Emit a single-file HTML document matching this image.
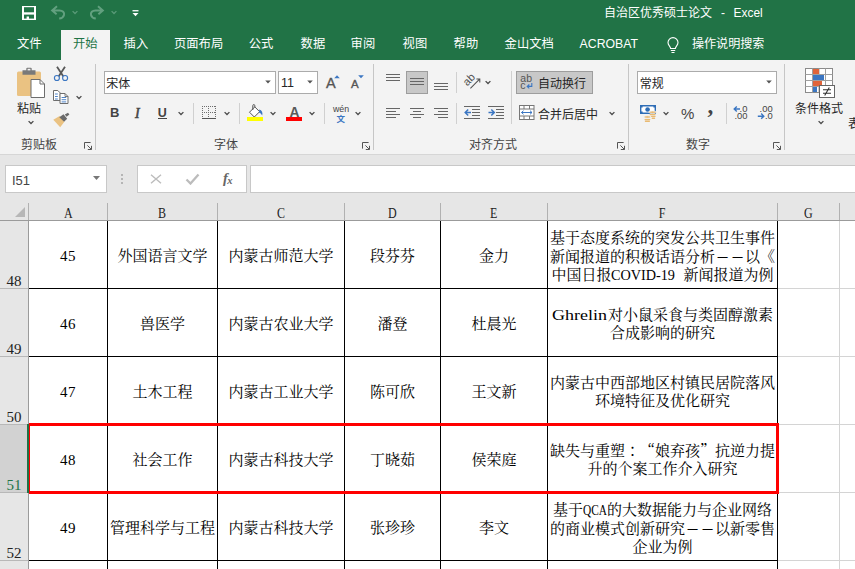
<!DOCTYPE html>
<html lang="zh-CN">
<head>
<meta charset="utf-8">
<title>自治区优秀硕士论文 - Excel</title>
<style>
html,body{margin:0;padding:0;}
body{width:855px;height:569px;overflow:hidden;position:relative;background:#e6e6e6;
 font-family:"Liberation Sans","Noto Sans CJK SC",sans-serif;font-size:12px;color:#262626;}
.abs{position:absolute;}
#app{position:absolute;left:0;top:0;width:855px;height:569px;overflow:hidden;}
/* title + tab bar */
#green{position:absolute;left:0;top:0;width:855px;height:60px;background:#217346;}
#title{position:absolute;left:604px;top:4.8px;color:#fff;font-size:12px;line-height:17px;white-space:nowrap;}
.tab{position:absolute;top:35px;margin-left:0.6px;height:18px;line-height:18px;color:#fff;font-size:12.3px;white-space:nowrap;}
#tabsel{position:absolute;left:61px;top:30px;width:49px;height:30px;background:#f3f3f3;}
#ribbon{position:absolute;left:0;top:60px;width:855px;height:94px;background:#f3f3f3;border-bottom:1px solid #d6d6d6;}
.sep{position:absolute;width:1px;background:#c8c8c8;}
.glabel{position:absolute;top:137.5px;height:14px;line-height:14px;font-size:12px;color:#444;white-space:nowrap;}
.rt{position:absolute;white-space:nowrap;color:#262626;}
.combo{position:absolute;background:#fff;border:1px solid #ababab;box-sizing:border-box;}
.chev{position:absolute;width:4px;height:4px;border-right:1px solid #555;border-bottom:1px solid #555;transform:rotate(45deg);}
.tri{position:absolute;width:0;height:0;border-left:3px solid transparent;border-right:3px solid transparent;border-top:3px solid #555;}
/* formula bar */
#fbar{position:absolute;left:0;top:155px;width:855px;height:49px;background:#e6e6e6;}
.fbox{position:absolute;top:165px;height:28px;background:#fff;border:1px solid #c8c8c8;box-sizing:border-box;}
/* grid */
#grid{position:absolute;left:0;top:204px;width:855px;height:365px;background:#fff;}
#colhdr{position:absolute;left:0;top:204px;width:855px;height:16px;background:#e6e6e6;border-bottom:1px solid #9b9b9b;}
#rowhdr{position:absolute;left:0;top:221px;width:28px;height:348px;background:#e6e6e6;border-right:1px solid #9b9b9b;}
.ch{position:absolute;top:206px;height:15px;line-height:15px;text-align:center;font-family:"Liberation Serif","Noto Serif CJK SC",serif;font-size:15px;color:#222;}
.chs{position:absolute;top:203px;width:1px;height:17px;background:#b1b1b1;}
.rh{position:absolute;left:0;width:28px;text-align:center;font-family:"Liberation Serif","Noto Serif CJK SC",serif;font-size:15px;line-height:15px;height:15px;color:#222;}
.vl{position:absolute;width:1px;background:#000;top:221px;height:348px;}
.hl{position:absolute;height:1px;background:#000;left:29px;width:749px;}
.gl{position:absolute;background:#d4d4d4;}
.c{position:absolute;display:flex;align-items:center;justify-content:center;text-align:center;
 font-family:"Liberation Serif","Noto Serif CJK SC",serif;font-size:15px;line-height:18px;color:#000;white-space:nowrap;}
.c>div{position:relative;top:1px;}
.c.t3>div{top:2px;}
.c.n{letter-spacing:0.5px;}
.c span.l{display:inline-block;text-align:left;white-space:nowrap;vertical-align:baseline;}
.c span.l>span{display:inline-block;transform-origin:0 50%;}
.c.t2>div{top:1px;}
.ch>span{display:inline-block;transform:scaleX(.8);}
.c span.p{font-family:"Noto Serif CJK SC",serif;}
.c span.q{font-family:"Noto Serif CJK SC",serif;display:inline-block;width:15px;}
.c span.d{transform:scaleX(.8);font-weight:700;}
.c span.j{font-family:"Noto Serif CJK JP",serif;}
</style>
</head>
<body>
<div id="app">
<div id="green"></div>
<div id="title">自治区优秀硕士论文<span style="position:absolute;left:117px;top:0">-</span><span style="position:absolute;left:129.6px;top:0;font-size:11.9px">Excel</span></div>
<div id="tabsel"></div>
<div class="tab" style="left:16.4px">文件</div>
<div class="tab" style="left:72.4px;color:#217346">开始</div>
<div class="tab" style="left:123px">插入</div>
<div class="tab" style="left:173.4px">页面布局</div>
<div class="tab" style="left:248.2px">公式</div>
<div class="tab" style="left:300px">数据</div>
<div class="tab" style="left:350px">审阅</div>
<div class="tab" style="left:402px">视图</div>
<div class="tab" style="left:453px">帮助</div>
<div class="tab" style="left:504px">金山文档</div>
<div class="tab" style="left:579px">ACROBAT</div>
<div class="tab" style="left:691.3px;font-size:12.1px">操作说明搜索</div>
<div id="ribbon"></div>
<!--RIBBON-->
<svg class="abs" style="left:22px;top:6px" width="14" height="14" viewBox="0 0 14 14"><path d="M1 0.6H13V13.4H1Z" fill="#fff" stroke="#fff" stroke-width="2" /><rect x="2" y="1.2" width="10" height="5.1" fill="#217346"/><rect x="2" y="8.6" width="10" height="4" fill="#217346"/><rect x="4.6" y="10.5" width="2.4" height="2.5" fill="#fff"/></svg>
<svg class="abs" style="left:50px;top:5px" width="16" height="15" viewBox="0 0 16 15"><path d="M7 1.3L2.2 5.4L6.6 9.2M2.4 5.4H9.5C12.8 5.4 14.6 7.6 14 10C13.4 12.2 11.6 13.4 9.2 13.6" fill="none" stroke="#62a07f" stroke-width="2"/></svg>
<svg class="abs" style="left:71px;top:10px" width="8" height="5" viewBox="0 0 8 5"><path d="M1.6 1.1L4 3.5L6.4 1.1" stroke="#5a9a78" stroke-width="1.3" fill="none"/></svg>
<svg class="abs" style="left:89px;top:5px" width="16" height="15" viewBox="0 0 16 15"><path d="M9 1.3L13.8 5.4L9.4 9.2M13.6 5.4H6.5C3.2 5.4 1.4 7.6 2 10C2.6 12.2 4.4 13.4 6.8 13.6" fill="none" stroke="#62a07f" stroke-width="2"/></svg>
<svg class="abs" style="left:110px;top:10px" width="8" height="5" viewBox="0 0 8 5"><path d="M1.6 1.1L4 3.5L6.4 1.1" stroke="#5a9a78" stroke-width="1.3" fill="none"/></svg>
<svg class="abs" style="left:132px;top:10px" width="8" height="7" viewBox="0 0 8 7"><path d="M0.5 0.75H6.5" stroke="#fff" stroke-width="1.3"/><path d="M0.5 3H6.5L3.5 6.2Z" fill="#fff"/></svg>
<svg class="abs" style="left:666px;top:37px" width="14" height="17" viewBox="0 0 14 17"><path d="M4.6 11.5C4.6 9.5 2 8.6 2 5.6A5 5 0 0 1 12 5.6C12 8.6 9.4 9.5 9.4 11.5Z" fill="none" stroke="#fff" stroke-width="1.1"/><path d="M4.8 13.5H9.2M5.5 15.5H8.5" stroke="#fff" stroke-width="1.1"/></svg>
<svg class="abs" style="left:16px;top:67px" width="30" height="31" viewBox="0 0 30 31">
<rect x="1" y="4.5" width="24" height="24.5" rx="1.5" fill="#eac282"/>
<path d="M6.5 4.5V3.2H10.3V1.6A1 1 0 0 1 11.3 0.8H14.7A1 1 0 0 1 15.7 1.6V3.2H19.5V7.8H6.5Z" fill="#797979"/>
<rect x="11.6" y="1.8" width="2.8" height="1.6" fill="#f3f3f3"/>
<path d="M15 12.5H24L28.5 17V30.5H15Z" fill="#fff" stroke="#6d6d6d" stroke-width="1"/>
<path d="M24 12.5V17H28.5" fill="none" stroke="#6d6d6d" stroke-width="1"/>
</svg>
<div class="rt" style="left:17px;top:101px;font-size:12px;line-height:16px;">粘贴</div>
<svg class="abs" style="left:27px;top:120px" width="8" height="5" viewBox="0 0 8 5"><path d="M1.6 1.1L4 3.5L6.4 1.1" stroke="#4a4a4a" stroke-width="1.3" fill="none"/></svg>
<svg class="abs" style="left:53px;top:66px" width="16" height="16" viewBox="0 0 16 16">
<path d="M4 0.8L10.4 10.6M12 0.8L5.6 10.6" stroke="#585858" stroke-width="1.8" fill="none"/>
<circle cx="3.9" cy="12" r="2.5" fill="#f3f3f3" stroke="#3b76c2" stroke-width="1.15"/>
<circle cx="12.1" cy="12" r="2.5" fill="#f3f3f3" stroke="#3b76c2" stroke-width="1.15"/>
</svg>
<svg class="abs" style="left:52px;top:89px" width="18" height="16" viewBox="0 0 18 16">
<path d="M1.5 1.5H5.8L8.2 3.9V11.5H1.5Z" fill="#fff" stroke="#6d6d6d"/>
<path d="M3 5H5.8M3 7.5H5.8M3 10H5.8" stroke="#3b76c2" stroke-width="0.9"/>
<path d="M8 4.5H13L16 7.5V14.5H8Z" fill="#fff" stroke="#6d6d6d"/>
<path d="M13 4.5V7.5H16" fill="none" stroke="#6d6d6d" stroke-width="0.9"/>
<path d="M9.6 8.5H14.2M9.6 10.7H14.2M9.6 12.9H14.2" stroke="#3b76c2" stroke-width="0.9"/>
</svg>
<svg class="abs" style="left:75px;top:95px" width="8" height="5" viewBox="0 0 8 5"><path d="M1.6 1.1L4 3.5L6.4 1.1" stroke="#4a4a4a" stroke-width="1.3" fill="none"/></svg>
<svg class="abs" style="left:53px;top:112px" width="17" height="16" viewBox="0 0 17 16">
<path d="M0.3 7.7L6.6 4.1L11.4 9.8L7.2 15.2Z" fill="#eac282"/>
<path d="M6.3 5.3L10.5 2.3L14.2 6.8L11.1 9.8Z" fill="#6a6a6a"/>
<path d="M11.8 2.6L15 0.8L16.4 2.6L13.6 4.8Z" fill="#6a6a6a"/>
</svg>
<div class="glabel" style="left:21px;">剪贴板</div>
<svg class="abs" style="left:84px;top:142px" width="8" height="8" viewBox="0 0 8 8"><path d="M0.5 6.6V0.5H6.6M3.4 3.4L7.3 7.3M7.5 3.8V7.5H3.8" stroke="#555" stroke-width="1" fill="none"/></svg>
<div class="sep" style="left:95px;top:64px;height:86px;background:#c6c6c6"></div>
<div class="combo" style="left:104px;top:71px;width:172px;height:23px"></div>
<div class="rt" style="left:106.3px;top:76px;font-size:12px;line-height:16px;">宋体</div>
<svg class="abs" style="left:264px;top:80px" width="8" height="4" viewBox="0 0 8 4"><path d="M1.2 0.5H6.8L4 3.5Z" fill="#555"/></svg>
<div class="combo" style="left:278px;top:71px;width:40px;height:23px"></div>
<div class="rt" style="left:281px;top:75px;font-size:12px;line-height:16px;font-size:12.5px">11</div>
<svg class="abs" style="left:306px;top:80px" width="8" height="4" viewBox="0 0 8 4"><path d="M1.2 0.5H6.8L4 3.5Z" fill="#555"/></svg>
<div class="rt" style="left:326px;top:73.7px;font-size:15px;line-height:19px;color:#555;font-size:14.5px;-webkit-text-stroke:0.35px #555">A</div>
<svg class="abs" style="left:333.5px;top:75px" width="6" height="4" viewBox="0 0 6 4"><path d="M0.2 3.2H5.8L3 0.2Z" fill="#3b76c2"/></svg>
<div class="rt" style="left:351px;top:76px;font-size:12px;line-height:16px;color:#555;font-size:11.5px;-webkit-text-stroke:0.35px #555">A</div>
<svg class="abs" style="left:358px;top:75px" width="6" height="4" viewBox="0 0 6 4"><path d="M0.2 0.2H5.8L3 3.2Z" fill="#3b76c2"/></svg>
<div class="rt" style="left:110px;top:104px;font-size:13px;line-height:17px;color:#444;font-size:13px"><b>B</b></div>
<div class="rt" style="left:135px;top:104.8px;font-size:13px;line-height:17px;color:#444;font-family:'Liberation Serif',serif;font-size:14px;-webkit-text-stroke:0.5px #444"><i>I</i></div>
<div class="rt" style="left:157.8px;top:104.8px;font-size:13px;line-height:17px;color:#444;font-size:12.5px"><b>U</b></div>
<div class="abs" style="left:158px;top:118px;width:9px;height:1px;background:#444"></div>
<svg class="abs" style="left:177px;top:111px" width="8" height="5" viewBox="0 0 8 5"><path d="M1.6 1.1L4 3.5L6.4 1.1" stroke="#4a4a4a" stroke-width="1.3" fill="none"/></svg>
<div class="sep" style="left:193px;top:103px;height:21px;background:#d0d0d0"></div>
<svg class="abs" style="left:202px;top:106px" width="14" height="14" viewBox="0 0 14 14">
<path d="M0 0.5H14M0 6.5H14M0.5 0V12M6.5 0V12M13.5 0V12" stroke="#6e6e6e" stroke-width="1" stroke-dasharray="1 1" fill="none" shape-rendering="crispEdges"/>
<path d="M0 12.5H14" stroke="#555" stroke-width="1"/></svg>
<svg class="abs" style="left:223px;top:111px" width="8" height="5" viewBox="0 0 8 5"><path d="M1.6 1.1L4 3.5L6.4 1.1" stroke="#4a4a4a" stroke-width="1.3" fill="none"/></svg>
<div class="sep" style="left:239px;top:103px;height:21px;background:#d0d0d0"></div>
<svg class="abs" style="left:247px;top:104px" width="18" height="18" viewBox="0 0 18 18">
<path d="M2.5 8.2L7.8 2.9L12.6 7.7L7.3 13Z" fill="#fff" stroke="#555" stroke-width="1"/>
<path d="M5.8 6V1.6A1 1 0 0 1 7.8 1.6V3" fill="none" stroke="#555" stroke-width="1"/>
<path d="M12.2 5.6C15 6.2 16 8.8 15.2 11.6C14.2 9.6 13.4 8.8 12 8.4Z" fill="#3b76c2"/>
<rect x="0" y="13" width="16" height="4" fill="#ffff00"/></svg>
<svg class="abs" style="left:269px;top:111px" width="8" height="5" viewBox="0 0 8 5"><path d="M1.6 1.1L4 3.5L6.4 1.1" stroke="#4a4a4a" stroke-width="1.3" fill="none"/></svg>
<div class="rt" style="left:289.5px;top:103.5px;font-size:14px;line-height:18px;color:#5a5a5a;font-size:13.8px;font-weight:bold">A</div>
<div class="abs" style="left:286px;top:117px;width:16px;height:4px;background:#ff0000"></div>
<svg class="abs" style="left:308px;top:111px" width="8" height="5" viewBox="0 0 8 5"><path d="M1.6 1.1L4 3.5L6.4 1.1" stroke="#4a4a4a" stroke-width="1.3" fill="none"/></svg>
<div class="sep" style="left:324px;top:103px;height:21px;background:#d0d0d0"></div>
<div class="rt" style="left:333px;top:102.5px;font-size:9px;line-height:13px;color:#444;font-size:8.8px;line-height:12px">wén</div>
<div class="rt" style="left:336.5px;top:112.5px;font-size:9px;line-height:13px;color:#3b76c2;font-size:8.5px;line-height:12px;font-weight:bold">文</div>
<svg class="abs" style="left:354px;top:111px" width="8" height="5" viewBox="0 0 8 5"><path d="M1.6 1.1L4 3.5L6.4 1.1" stroke="#4a4a4a" stroke-width="1.3" fill="none"/></svg>
<div class="glabel" style="left:214px;">字体</div>
<svg class="abs" style="left:362px;top:142px" width="8" height="8" viewBox="0 0 8 8"><path d="M0.5 6.6V0.5H6.6M3.4 3.4L7.3 7.3M7.5 3.8V7.5H3.8" stroke="#555" stroke-width="1" fill="none"/></svg>
<div class="sep" style="left:373px;top:64px;height:86px;background:#c6c6c6"></div>
<div class="abs" style="left:386px;top:74px;width:14px;height:1px;background:#666"></div>
<div class="abs" style="left:386px;top:77px;width:14px;height:1px;background:#666"></div>
<div class="abs" style="left:386px;top:80px;width:14px;height:1px;background:#666"></div>
<div class="abs" style="left:406px;top:71px;width:22px;height:23px;box-sizing:border-box;background:#c8c8c8;border:1px solid #9d9d9d"></div>
<div class="abs" style="left:410px;top:78px;width:14px;height:1px;background:#666"></div>
<div class="abs" style="left:410px;top:81px;width:14px;height:1px;background:#666"></div>
<div class="abs" style="left:410px;top:84px;width:14px;height:1px;background:#666"></div>
<div class="abs" style="left:434px;top:83px;width:14px;height:1px;background:#666"></div>
<div class="abs" style="left:434px;top:86px;width:14px;height:1px;background:#666"></div>
<div class="abs" style="left:434px;top:89px;width:14px;height:1px;background:#666"></div>
<div class="sep" style="left:456px;top:72px;height:21px;background:#d0d0d0"></div>
<svg class="abs" style="left:462px;top:72px" width="20" height="19" viewBox="0 0 20 19">
<text transform="translate(5.2,14.4) rotate(-45)" font-family="Liberation Sans, sans-serif" font-size="11" fill="#505050">ab</text>
<path d="M8.4 16.4L17.6 7.2M14.4 7H17.8V10.4" fill="none" stroke="#505050" stroke-width="1.05"/></svg>
<svg class="abs" style="left:484px;top:80px" width="8" height="5" viewBox="0 0 8 5"><path d="M1.6 1.1L4 3.5L6.4 1.1" stroke="#4a4a4a" stroke-width="1.3" fill="none"/></svg>
<div class="sep" style="left:511px;top:71px;height:53px;background:#d0d0d0"></div>
<div class="abs" style="left:386px;top:108px;width:14px;height:1px;background:#666"></div>
<div class="abs" style="left:386px;top:111px;width:10px;height:1px;background:#666"></div>
<div class="abs" style="left:386px;top:114px;width:14px;height:1px;background:#666"></div>
<div class="abs" style="left:386px;top:117px;width:10px;height:1px;background:#666"></div>
<div class="abs" style="left:410.0px;top:108px;width:14px;height:1px;background:#666"></div>
<div class="abs" style="left:413.0px;top:111px;width:8px;height:1px;background:#666"></div>
<div class="abs" style="left:410.0px;top:114px;width:14px;height:1px;background:#666"></div>
<div class="abs" style="left:413.0px;top:117px;width:8px;height:1px;background:#666"></div>
<div class="abs" style="left:434px;top:108px;width:14px;height:1px;background:#666"></div>
<div class="abs" style="left:438px;top:111px;width:10px;height:1px;background:#666"></div>
<div class="abs" style="left:434px;top:114px;width:14px;height:1px;background:#666"></div>
<div class="abs" style="left:438px;top:117px;width:10px;height:1px;background:#666"></div>
<div class="sep" style="left:456px;top:103px;height:21px;background:#d0d0d0"></div>
<svg class="abs" style="left:464px;top:106px" width="17" height="14" viewBox="0 0 17 14">
<path d="M0 0.5H16M8 3.5H16M8 6.5H16M8 9.5H16M0 12.5H16" stroke="#666" stroke-width="1"/>
<path d="M7 6.5H1.5M4.2 3.5L1.2 6.5L4.2 9.5" stroke="#3b76c2" stroke-width="1.5" fill="none"/></svg>
<svg class="abs" style="left:488px;top:106px" width="17" height="14" viewBox="0 0 17 14">
<path d="M0 0.5H16M8 3.5H16M8 6.5H16M8 9.5H16M0 12.5H16" stroke="#666" stroke-width="1"/>
<path d="M0.5 6.5H6M3.3 3.5L6.3 6.5L3.3 9.5" stroke="#3b76c2" stroke-width="1.5" fill="none"/></svg>
<div class="abs" style="left:516px;top:71px;width:77px;height:23px;box-sizing:border-box;background:#c8c8c8;border:1px solid #9d9d9d"></div>
<svg class="abs" style="left:520px;top:73px" width="15" height="18" viewBox="0 0 15 18">
<text x="0.3" y="9" font-family="Liberation Sans, sans-serif" font-size="10.5" fill="#555">ab</text>
<text x="0.3" y="16" font-family="Liberation Sans, sans-serif" font-size="10.5" fill="#555">c</text>
<path d="M11.8 10V13.4H7.4M9.3 11.5L7.2 13.4L9.3 15.3" fill="none" stroke="#3b76c2" stroke-width="1.1"/></svg>
<div class="rt" style="left:538px;top:75.5px;font-size:12px;line-height:16px;">自动换行</div>
<svg class="abs" style="left:519px;top:105px" width="16" height="15" viewBox="0 0 16 15">
<rect x="0.5" y="0.5" width="14.5" height="14" fill="#fff" stroke="#777"/>
<path d="M0.5 4H15M0.5 11H15M5 0.5V4M10.5 0.5V4M5 11V14.5M10.5 11V14.5" stroke="#777" stroke-width="1" fill="none"/>
<path d="M2.5 7.5H13M4.5 5.7L2.5 7.5L4.5 9.3M11 5.7L13 7.5L11 9.3" stroke="#3b76c2" stroke-width="1" fill="none"/></svg>
<div class="rt" style="left:538px;top:106.5px;font-size:12px;line-height:16px;">合并后居中</div>
<svg class="abs" style="left:608px;top:111px" width="8" height="5" viewBox="0 0 8 5"><path d="M1.6 1.1L4 3.5L6.4 1.1" stroke="#4a4a4a" stroke-width="1.3" fill="none"/></svg>
<div class="glabel" style="left:469px;">对齐方式</div>
<svg class="abs" style="left:617px;top:142px" width="8" height="8" viewBox="0 0 8 8"><path d="M0.5 6.6V0.5H6.6M3.4 3.4L7.3 7.3M7.5 3.8V7.5H3.8" stroke="#555" stroke-width="1" fill="none"/></svg>
<div class="sep" style="left:628px;top:64px;height:86px;background:#c6c6c6"></div>
<div class="combo" style="left:637px;top:71px;width:140px;height:23px"></div>
<div class="rt" style="left:639.8px;top:76px;font-size:12px;line-height:16px;">常规</div>
<svg class="abs" style="left:765px;top:80px" width="8" height="4" viewBox="0 0 8 4"><path d="M1.2 0.5H6.8L4 3.5Z" fill="#555"/></svg>
<svg class="abs" style="left:640px;top:104px" width="18" height="18" viewBox="0 0 18 18">
<rect x="0" y="1" width="16" height="9" fill="#2e6db6"/>
<path d="M2.6 2.4H13.4V3.4H14.6V7.6H13.4V8.6H2.6V7.6H1.4V3.4H2.6Z" fill="#fff"/>
<circle cx="7.6" cy="5.5" r="2.3" fill="#2e6db6"/>
<g fill="#e9ba72"><ellipse cx="12.6" cy="8.2" rx="3.7" ry="1.3" stroke="#f3f3f3" stroke-width="0.8"/>
<rect x="9.6" y="10" width="6" height="1.3" rx="0.6"/><rect x="11" y="11.8" width="4.6" height="1.3" rx="0.6"/><rect x="11.6" y="13.6" width="3.6" height="1.3" rx="0.6"/>
<ellipse cx="7.4" cy="13" rx="3.5" ry="1.3" stroke="#f3f3f3" stroke-width="0.8"/><rect x="4.4" y="14.9" width="6" height="1.3" rx="0.6"/><rect x="4.8" y="16.6" width="5.2" height="1.3" rx="0.6"/></g>
</svg>
<svg class="abs" style="left:662px;top:111.4px" width="8" height="5" viewBox="0 0 8 5"><path d="M1.6 1.1L4 3.5L6.4 1.1" stroke="#4a4a4a" stroke-width="1.3" fill="none"/></svg>
<div class="rt" style="left:681px;top:103.5px;font-size:15px;line-height:19px;color:#444;font-size:15px">%</div>
<div class="rt" style="left:707.5px;top:90.5px;font-size:18px;line-height:22px;color:#444;font-size:23px;line-height:30px;font-weight:bold;font-family:'Liberation Serif',serif">,</div>
<div class="sep" style="left:726px;top:103px;height:21px;background:#d0d0d0"></div>
<svg class="abs" style="left:733px;top:105px" width="17" height="15" viewBox="0 0 17 15">
<text x="6.6" y="7.2" font-family="Liberation Sans, sans-serif" font-size="9.4" fill="#444">.0</text>
<text x="1.4" y="14.4" font-family="Liberation Sans, sans-serif" font-size="9.4" fill="#444">.00</text>
<path d="M7 4H1.4M3.8 1.4L1.2 4L3.8 6.6" stroke="#3b76c2" stroke-width="1.4" fill="none"/></svg>
<svg class="abs" style="left:757px;top:105px" width="17" height="15" viewBox="0 0 17 15">
<text x="2.6" y="7.2" font-family="Liberation Sans, sans-serif" font-size="9.4" fill="#444">.00</text>
<text x="8" y="14.4" font-family="Liberation Sans, sans-serif" font-size="9.4" fill="#444">.0</text>
<path d="M0.8 11.2H6.6M4.2 8.6L6.8 11.2L4.2 13.8" stroke="#3b76c2" stroke-width="1.4" fill="none"/></svg>
<div class="glabel" style="left:686px;">数字</div>
<svg class="abs" style="left:773px;top:142px" width="8" height="8" viewBox="0 0 8 8"><path d="M0.5 6.6V0.5H6.6M3.4 3.4L7.3 7.3M7.5 3.8V7.5H3.8" stroke="#555" stroke-width="1" fill="none"/></svg>
<div class="sep" style="left:784px;top:64px;height:86px;background:#c6c6c6"></div>
<svg class="abs" style="left:805px;top:68px" width="31" height="31" viewBox="0 0 31 31">
<rect x="0.5" y="0.5" width="27" height="24" fill="#fff" stroke="#8a8a8a"/>
<path d="M7.5 0.5V24.5M14 0.5V24.5M20.5 0.5V24.5M0.5 6.5H27.5M0.5 12.5H27.5M0.5 18.5H27.5" stroke="#a0a0a0" stroke-width="1" fill="none"/>
<rect x="8" y="1" width="6" height="5" fill="#e0643a"/>
<rect x="8" y="7" width="11" height="5" fill="#3b76c2"/>
<rect x="8" y="13" width="9" height="5" fill="#e0643a"/>
<rect x="8" y="19" width="4" height="5" fill="#3b76c2"/>
<rect x="14.5" y="17.5" width="15" height="12" fill="#fff" stroke="#666"/>
<path d="M18 21.8H26M18 25.2H26M24.3 19.5L19.7 27.5" stroke="#333" stroke-width="1.1" fill="none"/>
</svg>
<div class="rt" style="left:795px;top:101px;font-size:12px;line-height:16px;">条件格式</div>
<svg class="abs" style="left:817px;top:120px" width="8" height="5" viewBox="0 0 8 5"><path d="M1.6 1.1L4 3.5L6.4 1.1" stroke="#4a4a4a" stroke-width="1.3" fill="none"/></svg>
<div class="rt" style="left:848px;top:116px;font-size:12px;line-height:16px;">表格格式</div>
<!--/RIBBON-->
<div id="fbar"></div>
<!--FBAR-->
<div class="fbox" style="left:5px;width:102px"></div>
<div class="rt" style="left:12px;top:171.5px;font-size:13px;line-height:17px;color:#444">I51</div>
<svg class="abs" style="left:93px;top:176px" width="7" height="4" viewBox="0 0 7 4"><path d="M0 0H7L3.5 4Z" fill="#777"/></svg>
<div class="abs" style="left:121px;top:174px;width:2px;height:2px;background:#b5b5b5"></div>
<div class="abs" style="left:121px;top:178px;width:2px;height:2px;background:#b5b5b5"></div>
<div class="abs" style="left:121px;top:182px;width:2px;height:2px;background:#b5b5b5"></div>
<div class="fbox" style="left:137px;width:110px"></div>
<svg class="abs" style="left:150px;top:174px" width="12" height="10" viewBox="0 0 12 10"><path d="M1 0.7L11 9.3M11 0.7L1 9.3" stroke="#bcbcbc" stroke-width="1.4" fill="none"/></svg>
<svg class="abs" style="left:185px;top:173px" width="15" height="12" viewBox="0 0 15 12"><path d="M1.5 6.5L5.5 10.5L13.5 1.5" stroke="#bcbcbc" stroke-width="2.3" fill="none"/></svg>
<div class="rt" style="left:223px;top:168px;font-family:'Liberation Serif',serif;font-style:italic;font-weight:bold;font-size:14.5px;line-height:20px;color:#666">f<span style="font-size:10.5px;position:relative;left:-0.5px;top:0.5px">x</span></div>
<div class="fbox" style="left:250px;width:620px"></div>
<!--/FBAR-->
<div id="grid"></div>
<div id="colhdr"></div>
<div id="rowhdr"></div>
<!--GRID-->
<div class="ch" style="left:29px;width:78px"><span>A</span></div>
<div class="ch" style="left:108px;width:109px"><span>B</span></div>
<div class="ch" style="left:218px;width:126px"><span>C</span></div>
<div class="ch" style="left:345px;width:95px"><span>D</span></div>
<div class="ch" style="left:441px;width:106px"><span>E</span></div>
<div class="ch" style="left:548px;width:229px"><span>F</span></div>
<div class="ch" style="left:778px;width:61px"><span>G</span></div>
<div class="chs" style="left:107px"></div>
<div class="chs" style="left:217px"></div>
<div class="chs" style="left:344px"></div>
<div class="chs" style="left:440px"></div>
<div class="chs" style="left:547px"></div>
<div class="chs" style="left:777px"></div>
<div class="chs" style="left:839px"></div>
<div class="chs" style="left:28px"></div>
<svg class="abs" style="left:14px;top:206px" width="12" height="12" viewBox="0 0 12 12"><path d="M11 1V11H1Z" fill="#b7b7b7"/></svg>
<div class="gl" style="left:778px;top:288px;width:77px;height:1px"></div>
<div class="gl" style="left:778px;top:356px;width:77px;height:1px"></div>
<div class="gl" style="left:778px;top:424px;width:77px;height:1px"></div>
<div class="gl" style="left:778px;top:492px;width:77px;height:1px"></div>
<div class="gl" style="left:778px;top:560px;width:77px;height:1px"></div>
<div class="gl" style="left:839px;top:221px;width:1px;height:348px"></div>
<div class="vl" style="left:107px"></div>
<div class="vl" style="left:217px"></div>
<div class="vl" style="left:344px"></div>
<div class="vl" style="left:440px"></div>
<div class="vl" style="left:547px"></div>
<div class="vl" style="left:777px"></div>
<div class="hl" style="top:288px"></div>
<div class="hl" style="top:356px"></div>
<div class="hl" style="top:424px"></div>
<div class="hl" style="top:492px"></div>
<div class="hl" style="top:560px"></div>
<div class="abs" style="left:0;top:288px;width:28px;height:1px;background:#b8b8b8"></div>
<div class="rh" style="top:274px;color:#222">48</div>
<div class="abs" style="left:0;top:356px;width:28px;height:1px;background:#b8b8b8"></div>
<div class="rh" style="top:342px;color:#222">49</div>
<div class="abs" style="left:0;top:424px;width:28px;height:1px;background:#b8b8b8"></div>
<div class="rh" style="top:410px;color:#222">50</div>
<div class="abs" style="left:0;top:424px;width:27px;height:69px;background:#d2d2d2"></div>
<div class="abs" style="left:27px;top:424px;width:2px;height:69px;background:#217346"></div>
<div class="abs" style="left:0;top:424px;width:27px;height:1px;background:#b8b8b8"></div>
<div class="abs" style="left:0;top:492px;width:27px;height:1px;background:#b8b8b8"></div>
<div class="rh" style="top:478px;color:#217346">51</div>
<div class="abs" style="left:0;top:560px;width:28px;height:1px;background:#b8b8b8"></div>
<div class="rh" style="top:546px;color:#222">52</div>
<div class="c n" style="left:29px;top:221px;width:78px;height:67px"><div>45</div></div>
<div class="c" style="left:108px;top:221px;width:109px;height:67px"><div>外国语言文学</div></div>
<div class="c" style="left:218px;top:221px;width:126px;height:67px"><div>内蒙古师范大学</div></div>
<div class="c" style="left:345px;top:221px;width:95px;height:67px"><div>段芬芬</div></div>
<div class="c" style="left:441px;top:221px;width:106px;height:67px"><div>金力</div></div>
<div class="c t3" style="left:548px;top:221px;width:229px;height:67px"><div>基于态度系统的突发公共卫生事件<br>新闻报道的积极话语分析<span class="q d">—</span><span class="q d">—</span>以<span class="p">《</span><br>中国日报<span class="l" style="width:72px"><span style="transform:scaleX(0.948)">COVID-19</span></span>新闻报道为例</div></div>
<div class="c n" style="left:29px;top:289px;width:78px;height:67px"><div>46</div></div>
<div class="c" style="left:108px;top:289px;width:109px;height:67px"><div>兽医学</div></div>
<div class="c" style="left:218px;top:289px;width:126px;height:67px"><div>内蒙古农业大学</div></div>
<div class="c" style="left:345px;top:289px;width:95px;height:67px"><div>潘登</div></div>
<div class="c" style="left:441px;top:289px;width:106px;height:67px"><div>杜晨光</div></div>
<div class="c t2" style="left:548px;top:289px;width:229px;height:67px"><div><span class="l" style="width:56px"><span style="transform:scaleX(1.2)">Ghrelin</span></span>对小鼠采食与类固醇激素<br>合成影响的研究</div></div>
<div class="c n" style="left:29px;top:357px;width:78px;height:67px"><div>47</div></div>
<div class="c" style="left:108px;top:357px;width:109px;height:67px"><div>土木工程</div></div>
<div class="c" style="left:218px;top:357px;width:126px;height:67px"><div>内蒙古工业大学</div></div>
<div class="c" style="left:345px;top:357px;width:95px;height:67px"><div>陈可欣</div></div>
<div class="c" style="left:441px;top:357px;width:106px;height:67px"><div>王文新</div></div>
<div class="c t2" style="left:548px;top:357px;width:229px;height:67px"><div>内蒙古中西部地区村镇民居院落风<br>环境特征及优化研究</div></div>
<div class="c n" style="left:29px;top:425px;width:78px;height:67px"><div>48</div></div>
<div class="c" style="left:108px;top:425px;width:109px;height:67px"><div>社会工作</div></div>
<div class="c" style="left:218px;top:425px;width:126px;height:67px"><div>内蒙古科技大学</div></div>
<div class="c" style="left:345px;top:425px;width:95px;height:67px"><div>丁晓茹</div></div>
<div class="c" style="left:441px;top:425px;width:106px;height:67px"><div>侯荣庭</div></div>
<div class="c t2" style="left:548px;top:425px;width:229px;height:67px"><div>缺失与重塑<span class="q j">：</span><span class="q">“</span>娘弃孩<span class="q">”</span>抗逆力提<br>升的个案工作介入研究</div></div>
<div class="c n" style="left:29px;top:493px;width:78px;height:67px"><div>49</div></div>
<div class="c" style="left:108px;top:493px;width:109px;height:67px"><div>管理科学与工程</div></div>
<div class="c" style="left:218px;top:493px;width:126px;height:67px"><div>内蒙古科技大学</div></div>
<div class="c" style="left:345px;top:493px;width:95px;height:67px"><div>张珍珍</div></div>
<div class="c" style="left:441px;top:493px;width:106px;height:67px"><div>李文</div></div>
<div class="c t3" style="left:548px;top:493px;width:229px;height:67px"><div>基于<span class="l" style="width:24px"><span style="transform:scaleX(0.757)">QCA</span></span>的大数据能力与企业网络<br>的商业模式创新研究<span class="q d">—</span><span class="q d">—</span>以新零售<br>企业为例</div></div>
<div class="abs" style="left:27px;top:423px;width:752px;height:71px;box-sizing:border-box;border:3px solid #ff0000;clip-path:inset(0 0 0 2px)"></div>
<!--/GRID-->
</div>
</body>
</html>
